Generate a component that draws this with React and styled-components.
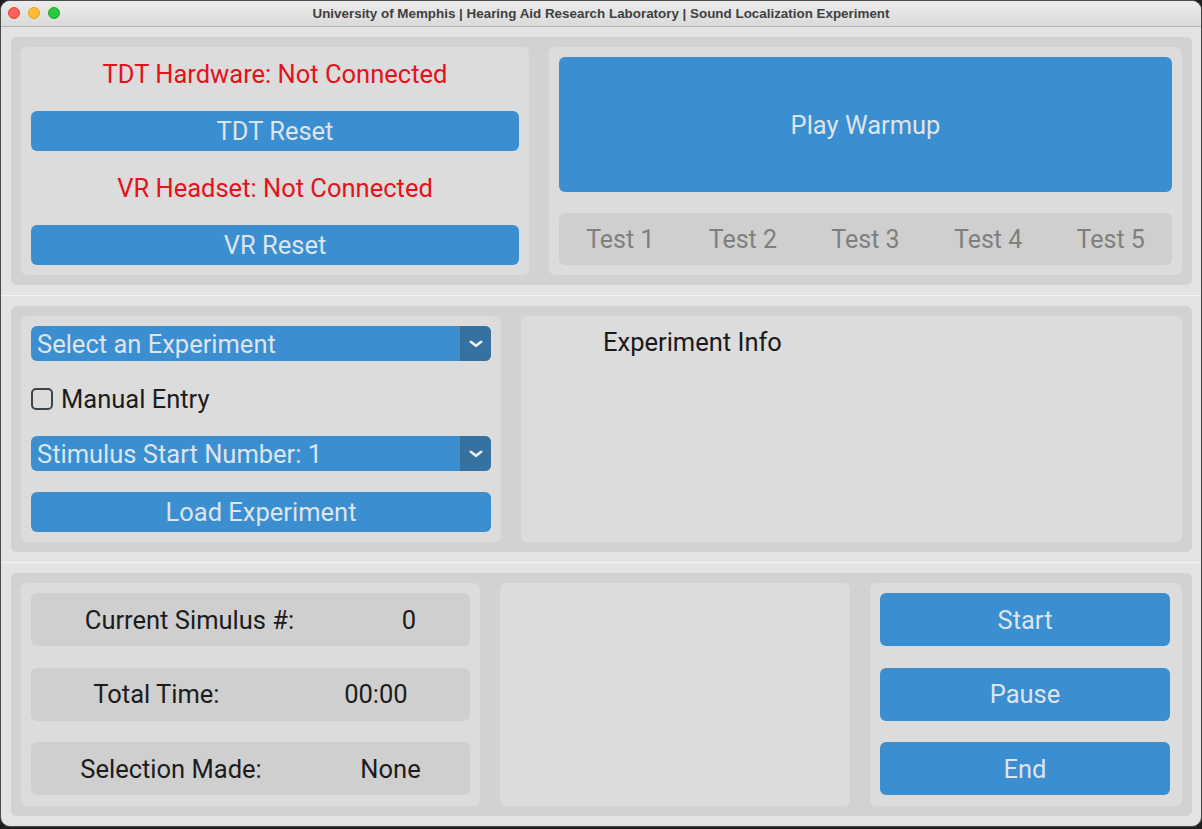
import styled, { createGlobalStyle } from "styled-components";

const GlobalStyle = createGlobalStyle`
  html, body {
    margin: 0;
    padding: 0;
    background: #1e1e20;
  }
  body {
    font-family: Roboto, "Noto Sans", sans-serif;
  }
  * {
    box-sizing: border-box;
  }
`;

const BLUE = "#3b8ed0";
const BLUE_DARK = "#36719f";
const BTN_TEXT = "#dce4ee";
const TEXT_SIZE = "25.5px";

const TrafficLights = () => (
  <Lights>
    <Light color="#fe5f57" border="#e0443e" />
    <Light color="#febc2e" border="#dea123" />
    <Light color="#28c840" border="#1aab29" />
  </Lights>
);

const Chevron = () => (
  <svg width="14" height="8" viewBox="0 0 14 8">
    <path d="M1.8 1.8 L7 5.8 L12.2 1.8" fill="none" stroke="#eef3f8" strokeWidth="2.6" strokeLinecap="round" strokeLinejoin="round" />
  </svg>
);

const Dropdown = ({ label }) => (
  <Select>
    <SelectText>{label}</SelectText>
    <SelectArrow>
      <Chevron />
    </SelectArrow>
  </Select>
);

const StatusRow = ({ label, value }) => (
  <Row>
    <span>{label}</span>
    <span>{value}</span>
  </Row>
);

export default function App() {
  return (
    <>
      <GlobalStyle />
      <Window>
        <TitleBar>
          <TrafficLights />
          <Title>University of Memphis | Hearing Aid Research Laboratory | Sound Localization Experiment</Title>
        </TitleBar>
        <Body>
          <Section>
            <Frame columns="508px 1fr">
              <Panel>
                <HardwareStack>
                  <Status>TDT Hardware: Not Connected</Status>
                  <Button>TDT Reset</Button>
                  <Status>VR Headset: Not Connected</Status>
                  <Button>VR Reset</Button>
                </HardwareStack>
              </Panel>
              <Panel>
                <WarmupStack>
                  <Button big>Play Warmup</Button>
                  <TestBar>
                    {[1, 2, 3, 4, 5].map((n) => (
                      <TestLabel key={n}>Test {n}</TestLabel>
                    ))}
                  </TestBar>
                </WarmupStack>
              </Panel>
            </Frame>
          </Section>
          <Separator />
          <Section>
            <Frame columns="480px 1fr">
              <Panel>
                <ExperimentStack>
                  <Dropdown label="Select an Experiment" />
                  <CheckRow>
                    <CheckBox />
                    <span>Manual Entry</span>
                  </CheckRow>
                  <Dropdown label="Stimulus Start Number: 1" />
                  <Button>Load Experiment</Button>
                </ExperimentStack>
              </Panel>
              <Panel>
                <InfoTitle>Experiment Info</InfoTitle>
              </Panel>
            </Frame>
          </Section>
          <Separator />
          <Section last>
            <Frame columns="459px 350px 1fr">
              <Panel>
                <RowStack>
                  <StatusRow label="Current Simulus #:" value="0" />
                  <StatusRow label="Total Time:" value="00:00" />
                  <StatusRow label="Selection Made:" value="None" />
                </RowStack>
              </Panel>
              <Panel />
              <Panel narrow>
                <RowStack>
                  <Button tall>Start</Button>
                  <Button tall>Pause</Button>
                  <Button tall>End</Button>
                </RowStack>
              </Panel>
            </Frame>
          </Section>
        </Body>
      </Window>
    </>
  );
}

const Window = styled.div`
  width: 1202px;
  height: 827px;
  border-radius: 10px;
  overflow: hidden;
  border: 1px solid #4a4a4c;
  background: #e3e3e3;
  display: flex;
  flex-direction: column;
`;

const TitleBar = styled.div`
  position: relative;
  height: 26px;
  flex: none;
  display: flex;
  align-items: center;
  justify-content: center;
  background: linear-gradient(#ececec, #dadada);
  border-bottom: 1px solid #b4b4b4;
`;

const Lights = styled.div`
  position: absolute;
  left: 7px;
  top: 6px;
  display: flex;
  gap: 8px;
`;

const Light = styled.span`
  width: 12px;
  height: 12px;
  border-radius: 50%;
  background: ${(p) => p.color};
  border: 0.5px solid ${(p) => p.border};
`;

const Title = styled.div`
  font-family: "Liberation Sans", Arial, sans-serif;
  font-weight: bold;
  font-size: 13.4px;
  color: #404040;
`;

const Body = styled.div`
  flex: 1;
  display: flex;
  flex-direction: column;
`;

const Section = styled.div`
  padding: ${(p) => (p.last ? "10px 9px 0 10px" : "10px 9px 10px 10px")};
`;

const Separator = styled.div`
  height: 1px;
  flex: none;
  background: #f3f3f3;
`;

const Frame = styled.div`
  display: grid;
  grid-template-columns: ${(p) => p.columns};
  column-gap: 20px;
  padding: 10px;
  background: #d2d2d2;
  border-radius: 6px;
`;

const Panel = styled.div`
  background: #dcdcdc;
  border-radius: 6px;
  padding: ${(p) => (p.narrow ? "10px 12px 10px 10px" : "10px")};
`;

const HardwareStack = styled.div`
  display: grid;
  grid-template-rows: 34px 40px 34px 40px;
  row-gap: 20px;
`;

const Status = styled.div`
  color: #e5121b;
  font-size: ${TEXT_SIZE};
  display: flex;
  align-items: center;
  justify-content: center;
`;

const Button = styled.div`
  background: ${BLUE};
  color: ${BTN_TEXT};
  border-radius: 6px;
  font-size: ${TEXT_SIZE};
  display: flex;
  align-items: center;
  justify-content: center;
  height: ${(p) => (p.big ? "135px" : p.tall ? "53px" : "auto")};
`;

const WarmupStack = styled.div`
  display: flex;
  flex-direction: column;
  gap: 21px;
`;

const TestBar = styled.div`
  height: 52px;
  background: #cfcfcf;
  border-radius: 6px;
  display: grid;
  grid-template-columns: repeat(5, 1fr);
  align-items: center;
`;

const TestLabel = styled.div`
  font-size: 25px;
  color: #7f7f7f;
  text-align: center;
`;

const ExperimentStack = styled.div`
  display: grid;
  grid-template-rows: 35px 35px 35px 41px;
  row-gap: 20px;
  & > :last-child {
    margin-top: 1px;
  }
`;

const Select = styled.div`
  display: flex;
  background: ${BLUE};
  border-radius: 6px;
  overflow: hidden;
`;

const SelectText = styled.div`
  flex: 1;
  color: ${BTN_TEXT};
  font-size: ${TEXT_SIZE};
  padding-left: 6px;
  display: flex;
  align-items: center;
`;

const SelectArrow = styled.div`
  width: 31px;
  background: ${BLUE_DARK};
  display: flex;
  align-items: center;
  justify-content: center;
`;

const CheckRow = styled.div`
  display: flex;
  align-items: center;
  gap: 8px;
  font-size: ${TEXT_SIZE};
  color: #1c1c1c;
`;

const CheckBox = styled.span`
  width: 22px;
  height: 22px;
  border: 2px solid #3e454a;
  border-radius: 5px;
`;

const InfoTitle = styled.div`
  font-size: ${TEXT_SIZE};
  color: #1a1a1a;
  padding-left: 72px;
  height: 32px;
  display: flex;
  align-items: center;
`;

const RowStack = styled.div`
  display: grid;
  grid-template-rows: repeat(3, 53px);
  row-gap: 21.5px;
  padding-bottom: 1px;
`;

const Row = styled.div`
  background: #cfcfcf;
  border-radius: 6px;
  display: flex;
  align-items: center;
  justify-content: space-around;
  font-size: ${TEXT_SIZE};
  color: #1c1c1c;
`;
